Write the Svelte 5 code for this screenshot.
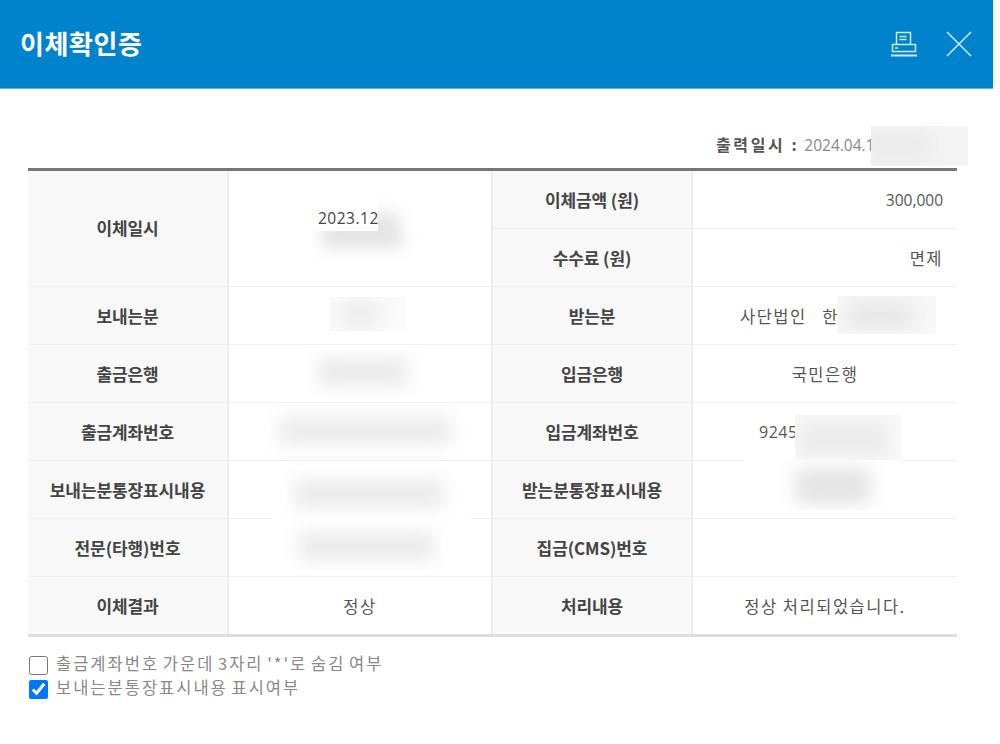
<script>
  const rows = [
    { a: "보내는분", av: "", b: "받는분", bv: "사단법인   한", bclass: "left-name" },
    { a: "출금은행", av: "", b: "입금은행", bv: "국민은행" },
    { a: "출금계좌번호", av: "", b: "입금계좌번호", bv: "9245", bclass: "left-acct" },
    { a: "보내는분통장표시내용", av: "", b: "받는분통장표시내용", bv: "" },
    { a: "전문(타행)번호", av: "", b: "집금(CMS)번호", bv: "" },
    { a: "이체결과", av: "정상", b: "처리내용", bv: "정상 처리되었습니다." },
  ];

  // redacted areas, page coordinates. blob = darker smear inside the patch
  const patches = [
    { x: 871, y: 126, w: 97, h: 40, bg: "#f4f4f4", blob: [-10, 6, 70, 30, "#ebebeb"] },
    { x: 378, y: 197, w: 36, h: 34, bg: "#fff", blob: [-12, 16, 34, 34, "#e2e2e2"] },
    { x: 312, y: 231, w: 108, h: 32, bg: "#fff", blob: [10, -8, 80, 24, "#dfdfdf"] },
    { x: 330, y: 297, w: 76, h: 34, bg: "#fafafa", blob: [10, 6, 40, 22, "#ebebeb"] },
    { x: 838, y: 296, w: 98, h: 38, bg: "#f7f7f7", blob: [10, 6, 64, 26, "#e6e6e6"] },
    { x: 258, y: 350, w: 213, h: 52, bg: "#fff", blob: [60, 8, 90, 28, "#eaeaea"] },
    { x: 258, y: 403, w: 213, h: 54, bg: "#fff", blob: [20, 14, 174, 28, "#ebebeb"] },
    { x: 272, y: 469, w: 198, h: 50, bg: "#fff", blob: [22, 10, 150, 30, "#ebebeb"] },
    { x: 272, y: 519, w: 198, h: 51, bg: "#fff", blob: [26, 12, 136, 30, "#ebebeb"] },
    { x: 795, y: 415, w: 106, h: 45, bg: "#f9f9f9", blob: [4, 6, 90, 36, "#ebebeb"] },
    { x: 745, y: 460, w: 156, h: 50, bg: "#fff", blob: [50, 8, 76, 36, "#e4e4e4"] },
  ];
</script>

<div class="page">
  <header class="bar">
    <h1>이체확인증</h1>
    <div class="bar-icons">
      <svg width="28" height="28" viewBox="0 0 28 28" fill="none" stroke="#cfe9fa" stroke-width="1.5">
        <path d="M6.5 14.5V2.5h14v12" />
        <path d="M9.5 6.5h7M9.5 9.5h7" />
        <rect x="2.5" y="14.5" width="23" height="7" />
        <path d="M5 18h3" />
        <path d="M1 25.5h26" stroke-width="2" />
      </svg>
      <svg width="26" height="26" viewBox="0 0 26 26" fill="none" stroke="#cfe9fa" stroke-width="1.6">
        <path d="M1 1l24 24M25 1L1 25" />
      </svg>
    </div>
  </header>

  <main class="content">
    <p class="printed"><b>출력일시 :</b> 2024.04.1</p>

    <table>
      <colgroup>
        <col class="c1" /><col class="c2" /><col class="c3" /><col class="c4" />
      </colgroup>
      <tbody>
        <tr class="first">
          <th rowspan="2" class="when">이체일시</th>
          <td rowspan="2" class="date mid"><span>2023.12</span></td>
          <th>이체금액 (원)</th>
          <td class="right num">300,000</td>
        </tr>
        <tr>
          <th>수수료 (원)</th>
          <td class="right">면제</td>
        </tr>
        {#each rows as row}
          <tr>
            <th>{row.a}</th>
            <td class="mid">{row.av}</td>
            <th>{row.b}</th>
            <td class={row.bclass}>{row.bv}</td>
          </tr>
        {/each}
      </tbody>
    </table>

    <div class="options">
      <label><input type="checkbox" />출금계좌번호 가운데 3자리 '*'로 숨김 여부</label>
      <label><input type="checkbox" checked />보내는분통장표시내용 표시여부</label>
    </div>
  </main>

  {#each patches as p}
    <div class="patch" style="left:{p.x}px;top:{p.y}px;width:{p.w}px;height:{p.h}px;background:{p.bg}">
      <div
        class="blob"
        style="left:{p.blob[0]}px;top:{p.blob[1]}px;width:{p.blob[2]}px;height:{p.blob[3]}px;background:{p.blob[4]}"
      ></div>
    </div>
  {/each}
</div>

<style>
  :global(body) {
    background: #fff;
  }

  .page {
    position: relative;
    width: 1000px;
    height: 744px;
    overflow: hidden;
    font-family: "Noto Sans CJK KR", "Noto Sans", sans-serif;
    color: #444;
  }

  .bar {
    width: 993px;
    height: 89px;
    box-sizing: border-box;
    padding: 0 21px 1px 20px;
    background: #0082cc;
    border-bottom: 1px solid #5fb6e6;
    display: flex;
    align-items: center;
    justify-content: space-between;
  }

  .bar h1 {
    margin: 0;
    color: #fff;
    font-size: 26px;
    font-weight: 700;
    letter-spacing: 0.6px;
    position: relative;
    top: -1px;
  }

  .bar-icons {
    display: flex;
    align-items: center;
    gap: 28px;
  }

  .bar-icons svg {
    display: block;
  }

  .content {
    padding: 0 0 0 28px;
    width: 929px;
  }

  .printed {
    margin: 0;
    height: 79px;
    box-sizing: border-box;
    padding: 43px 0 0 688px;
    font-size: 15.5px;
    line-height: 24px;
    color: #888;
    font-family: "Open Sans", "Noto Sans CJK KR", sans-serif;
    white-space: nowrap;
  }

  .printed b {
    font-family: "Noto Sans CJK KR", sans-serif;
    font-size: 16px;
    color: #555;
    letter-spacing: 2.6px;
    margin-right: 1px;
  }

  table {
    width: 929px;
    table-layout: fixed;
    border-collapse: collapse;
    border-top: 3px solid #777;
    border-bottom: 3px solid #ddd;
    font-size: 16.5px;
  }

  .c1 {
    width: 200px;
  }
  .c2 {
    width: 264px;
  }
  .c3 {
    width: 200px;
  }

  tr {
    height: 58px;
  }

  tr.first,
  tr:last-child {
    height: 59px;
  }

  th,
  td {
    padding: 0;
    text-align: center;
    border-top: 1px solid #f0f0f0;
    border-bottom: 1px solid #f0f0f0;
  }

  tr:first-child th,
  tr:first-child td {
    border-top: 0;
  }

  tr:last-child th,
  tr:last-child td {
    border-bottom: 0;
  }

  th {
    background: #f8f8f8;
    border-right: 2px solid #ececec;
    font-weight: 700;
    color: #444;
    font-size: 17px;
    letter-spacing: -0.1px;
    white-space: nowrap;
  }

  th.when {
    padding-bottom: 3px;
  }

  td {
    color: #555;
    letter-spacing: 1.5px;
  }

  td.mid {
    border-right: 2px solid #ececec;
  }

  td.right {
    text-align: right;
    padding-right: 14px;
  }

  td.num {
    font-family: "Open Sans", "Noto Sans CJK KR", sans-serif;
    font-size: 15.5px;
    letter-spacing: 0;
  }

  .date {
    font-family: "Open Sans", sans-serif;
    font-size: 15.5px;
    vertical-align: top;
    text-align: left;
    padding: 36px 0 0 89px;
    color: #444;
    letter-spacing: 0.5px;
  }

  td.left-name {
    text-align: left;
    padding-left: 47px;
    white-space: pre;
  }

  td.left-acct {
    text-align: left;
    padding: 0 0 0 66px;
    font-family: "Open Sans", sans-serif;
    font-size: 16px;
    letter-spacing: 0.5px;
  }

  .options {
    margin-top: 14px;
    font-size: 16.5px;
    line-height: 24px;
    color: #888;
    letter-spacing: 2px;
    word-spacing: -2px;
  }

  .options label {
    display: flex;
    align-items: center;
    gap: 8px;
    height: 24px;
    margin-left: 1px;
    white-space: pre;
  }

  .options input {
    width: 19px;
    height: 19px;
    margin: 4px 0 0;
    accent-color: #0075ff;
  }

  .patch {
    position: absolute;
    overflow: hidden;
  }

  .blob {
    position: absolute;
    filter: blur(9px);
  }
</style>
